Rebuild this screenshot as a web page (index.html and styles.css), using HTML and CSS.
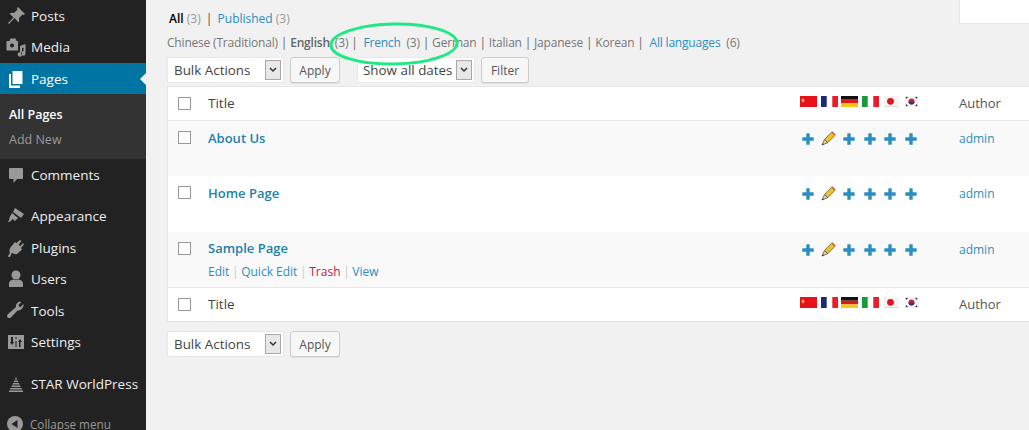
FILE: index.html
```html
<!DOCTYPE html>
<html lang="en">
<head>
<meta charset="utf-8">
<title>Pages</title>
<link rel="stylesheet" href="styles.css">
</head>
<body>
<svg width="0" height="0" class="defs">
  <defs>
    <g id="plus"><path d="M4.800.3h2.400a.5.5 0 0 1 .5.5v3.500h3.500a.5.5 0 0 1 .5.5v2.400a.5.5 0 0 1-.5.5H7.700v3.500a.5.5 0 0 1-.5.5H4.800a.5.5 0 0 1-.5-.5V7.700H.8a.5.5 0 0 1-.5-.5V4.800a.5.5 0 0 1 .5-.5h3.500V.8a.5.5 0 0 1 .5-.5z" fill="#2a8fc0"/></g>
    <g id="pencil">
      <path d="M3.500 8.500 10.500 1.200l3.300 3.200-7 7.300z" fill="#eec22e" stroke="#6b5a20" stroke-width=".8"/>
      <path d="M3.500 8.500 1 14l5.800-2.300z" fill="#e8d3a8" stroke="#555" stroke-width=".8"/>
      <path d="M1.800 12.200 1 14l1.900-.8z" fill="#222"/>
      <path d="M10.500 1.200l1-1 3.300 3.200-1 1z" fill="#c96a5a"/>
    </g>
    <g id="cn"><rect width="17" height="11" fill="#e8111a"/><path d="M3 2l.6 1.600L5 4l-1.200.8.3 1.600L3 5.500 1.900 6.400l.3-1.600L1 4l1.400-.4z" fill="#f8d84a"/></g>
    <g id="fr"><rect width="17" height="11" fill="#fff"/><rect width="5.700" height="11" fill="#1b2a78"/><rect x="11.300" width="5.700" height="11" fill="#ea1c2a"/></g>
    <g id="de"><rect width="17" height="3.700" fill="#111"/><rect y="3.700" width="17" height="3.700" fill="#dc1a1a"/><rect y="7.400" width="17" height="3.600" fill="#f2c81c"/></g>
    <g id="it"><rect width="17" height="11" fill="#fff"/><rect width="5.700" height="11" fill="#179a3c"/><rect x="11.300" width="5.700" height="11" fill="#ea1c2a"/></g>
    <g id="jp"><rect width="15" height="11" fill="#f4f4f4"/><rect y="10" width="15" height="1" fill="#ddd"/><circle cx="6.500" cy="5.300" r="3.400" fill="#e5101e"/></g>
    <g id="kr"><rect width="14" height="11" fill="#f4f4f4"/><circle cx="6.500" cy="5.500" r="3" fill="#d8232f"/><path d="M3.500 5.500a3 3 0 0 0 6 0z" fill="#1d3f8f"/><path d="M.8 2.200l1.600-1.200M.8 8.800l1.600 1.200M10.600 1l1.600 1.200M10.600 10l1.600-1.200" stroke="#222" stroke-width="1.200"/></g>
  </defs>
</svg>

<div class="app">
  <nav class="sidebar">
    <ul class="menu">
      <li class="item"><svg class="ico" viewBox="0 0 20 20"><path d="M12 1l7 7-1.500 1-1-.5-3.500 3.500c.5 2 .2 3.500-.5 4.500L8.500 12 3 18l-1-1 5.500-5.500L3.500 7.500c1-.7 2.500-1 4.500-.5L11.500 3.500 11 2.500z"/></svg><span>Posts</span></li>
      <li class="item"><svg class="ico" viewBox="0 0 20 20"><path d="M.5 4h3l1-2.500h5L10.500 4h1.500v9.500H.5zM6 6.500a2 2 0 1 0 .01 0zM19.500 7v9.500a2.200 2.200 0 1 1-2-2.200V10.500l-1.500.5v6.500a2.200 2.200 0 1 1-2-2.200V9z" fill-rule="evenodd"/></svg><span>Media</span></li>
      <li class="item current"><svg class="ico" viewBox="0 0 20 20"><path d="M6.500 2h10v13h-10z" fill="#fff"/><path d="M3 5h2v11.500h9V19H3z" fill="#fff"/></svg><span>Pages</span></li>
      <li class="submenu">
        <a class="sub on">All Pages</a>
        <a class="sub">Add New</a>
      </li>
      <li class="item"><svg class="ico" viewBox="0 0 20 20"><path d="M4 3h12a1 1 0 0 1 1 1v9a1 1 0 0 1-1 1h-5l-3.500 4v-4H4a1 1 0 0 1-1-1V4a1 1 0 0 1 1-1z"/></svg><span>Comments</span></li>
      <li class="item gap"><svg class="ico" viewBox="0 0 20 20"><path d="M9 2l9 6-3 4-8-6zM6 7l6 5-3 3-2.500-2c-1 2-2.500 3-5 3 1.500-1 2-3 2-4.500z"/></svg><span>Appearance</span></li>
      <li class="item"><svg class="ico" viewBox="0 0 20 20"><path d="M14 2l1.500 1-3 4 2 1L17 5l1 1.500-3 3.500 1 1.500-5 4.500c-2 .5-4-.3-5-1.500L4 19H2.500l-.5-1 2-3c-1-2-.7-4 .5-5.500L9 4l1.500 1z"/></svg><span>Plugins</span></li>
      <li class="item"><svg class="ico" viewBox="0 0 20 20"><circle cx="10" cy="6" r="4.500"/><path d="M3 18v-3.500C3 12 5 11 7.500 10.500c1.500 1 3.500 1 5 0C15 11 17 12 17 14.500V18z"/></svg><span>Users</span></li>
      <li class="item"><svg class="ico" viewBox="0 0 20 20"><path d="M17.500 3l-3 3-1.500-.5-.5-1.500 3-3c-3-.7-6 1.500-5.500 5L2 13c-1 1-1.300 2.500-.3 3.500s2.500.7 3.500-.3L11.500 9.500c3.500.5 6.700-3.500 6-6.500z"/></svg><span>Tools</span></li>
      <li class="item"><svg class="ico" viewBox="0 0 20 20"><path d="M2 3h16v14H2zM5 5v5H4l2 3 2-3H7V5zM13 15h1.500v-5H16l-2-3-2 3h1zM9.500 5v2h1V5zM9.500 9v6h1V9z" fill-rule="evenodd"/></svg><span>Settings</span></li>
      <li class="item gap star"><svg class="ico" viewBox="0 0 20 20"><path d="M10 3l1.200 2.500H8.800zM8.300 6.500h3.400l.7 1.500H7.600zM7.100 9h5.800l.7 1.500H6.400zM5.900 11.500h8.200l.7 1.500H5.200zM4.700 14h10.600l.7 1.500H4zM3 16.500h14V18H3z"/></svg><span>STAR WorldPress</span></li>
      <li class="collapse"><svg class="coll-ico" viewBox="0 0 16 16"><circle cx="8" cy="8" r="8" fill="#999"/><path d="M10.500 4v8L4.500 8z" fill="#222"/></svg><span>Collapse menu</span></li>
    </ul>
  </nav>

  <main class="main">
    <div class="search"></div>
    <div class="status"><b>All</b> <i>(3)</i> <span class="sep">|</span> <a>Published</a> <i>(3)</i></div>
    <div class="langs">Chinese (Traditional) <span class="s">|</span> <b>English</b> (3) <span class="s">|</span>&nbsp; <a>French</a>&nbsp; (3) <span class="s">|</span> German <span class="s">|</span> Italian <span class="s">|</span> Japanese <span class="s">|</span> Korean <span class="s">|</span>&nbsp; <a>All languages</a>&nbsp; (6)</div>
    <div class="actions">
      <div class="select bulk"><span>Bulk Actions</span><em class="arrow"><svg viewBox="0 0 8 6" width="8" height="6"><path d="M1 1l3 3 3-3" fill="none" stroke="#333" stroke-width="1.500"/></svg></em></div>
      <div class="btn">Apply</div>
      <div class="select dates"><span>Show all dates</span><em class="arrow"><svg viewBox="0 0 8 6" width="8" height="6"><path d="M1 1l3 3 3-3" fill="none" stroke="#333" stroke-width="1.500"/></svg></em></div>
      <div class="btn filter">Filter</div>
    </div>

    <div class="table">
      <div class="row head">
        <span class="cb"></span><span class="title">Title</span>
        <span class="flags"><svg class="f"><use href="#cn"/></svg><svg class="f"><use href="#fr"/></svg><svg class="f"><use href="#de"/></svg><svg class="f"><use href="#it"/></svg><svg class="f jp"><use href="#jp"/></svg><svg class="f kr"><use href="#kr"/></svg></span>
        <span class="author">Author</span>
      </div>
      <div class="row page alt">
        <span class="cb"></span><div class="title"><a class="name">About Us</a></div>
        <span class="marks"><svg class="m"><use href="#plus"/></svg><svg class="m pen"><use href="#pencil"/></svg><svg class="m"><use href="#plus"/></svg><svg class="m"><use href="#plus"/></svg><svg class="m"><use href="#plus"/></svg><svg class="m"><use href="#plus"/></svg></span>
        <a class="author">admin</a>
      </div>
      <div class="row page tall">
        <span class="cb"></span><div class="title"><a class="name">Home Page</a></div>
        <span class="marks"><svg class="m"><use href="#plus"/></svg><svg class="m pen"><use href="#pencil"/></svg><svg class="m"><use href="#plus"/></svg><svg class="m"><use href="#plus"/></svg><svg class="m"><use href="#plus"/></svg><svg class="m"><use href="#plus"/></svg></span>
        <a class="author">admin</a>
      </div>
      <div class="row page alt sample">
        <span class="cb"></span><div class="title"><a class="name">Sample Page</a>
          <div class="rowacts"><a>Edit</a> <s>|</s> <a>Quick Edit</a> <s>|</s> <a class="trash">Trash</a> <s>|</s> <a>View</a></div></div>
        <span class="marks"><svg class="m"><use href="#plus"/></svg><svg class="m pen"><use href="#pencil"/></svg><svg class="m"><use href="#plus"/></svg><svg class="m"><use href="#plus"/></svg><svg class="m"><use href="#plus"/></svg><svg class="m"><use href="#plus"/></svg></span>
        <a class="author">admin</a>
      </div>
      <div class="row head foot">
        <span class="cb"></span><span class="title">Title</span>
        <span class="flags"><svg class="f"><use href="#cn"/></svg><svg class="f"><use href="#fr"/></svg><svg class="f"><use href="#de"/></svg><svg class="f"><use href="#it"/></svg><svg class="f jp"><use href="#jp"/></svg><svg class="f kr"><use href="#kr"/></svg></span>
        <span class="author">Author</span>
      </div>
    </div>

    <div class="actions bottom">
      <div class="select bulk"><span>Bulk Actions</span><em class="arrow"><svg viewBox="0 0 8 6" width="8" height="6"><path d="M1 1l3 3 3-3" fill="none" stroke="#333" stroke-width="1.500"/></svg></em></div>
      <div class="btn">Apply</div>
    </div>

    <svg class="ring" width="134" height="48" viewBox="0 0 134 48"><ellipse cx="67" cy="24" rx="63" ry="20" fill="none" stroke="#1fe884" stroke-width="3" transform="rotate(-1 67 24)"/></svg>
  </main>
</div>
</body>
</html>
```

FILE: styles.css
```css
* { box-sizing: border-box; }
html, body { margin: 0; height: 430px; overflow: hidden; }
body { background: #f1f1f1; font-family: "Open Sans", "Liberation Sans", sans-serif; font-size: 13px; color: #444; }
.defs { position: absolute; }
.app { display: flex; height: 430px; overflow: hidden; }

.sidebar { width: 146px; flex: none; background: #222; color: #eee; }
.menu { list-style: none; margin: 0; padding: 0; }
.item { height: 31.5px; display: flex; align-items: center; padding-left: 6px; font-size: 13.500px; position: relative; }
.item .ico { width: 20px; height: 20px; fill: #999; margin-right: 5px; flex: none; }
.gap { margin-top: 10px; }
.current { background: #0074a2; color: #fff; height: 31px; }
.current::after { content: ""; position: absolute; right: 0; top: 10px; border: 6px solid transparent; border-right-color: #f1f1f1; border-left: 0; }
.submenu { background: #333; height: 65px; padding-top: 8px; display: flex; flex-direction: column; }
.sub { font-size: 12.500px; color: #999; padding-left: 9px; height: 25px; line-height: 25px; }
.sub.on { color: #fff; font-weight: 600; }
.collapse { margin-top: 16px; display: flex; align-items: center; padding-left: 7px; font-size: 11.700px; color: #999; white-space: nowrap; }
.coll-ico { width: 16px; height: 16px; margin-right: 7px; flex: none; }

.main { flex: 1; min-width: 0; padding: 0 0 0 21px; position: relative; }
.search { position: absolute; right: 0; top: 0; width: 70px; height: 24px; background: #fff; border: 1px solid #e6e6e6; border-top: 0; border-right: 0; }
.status { padding: 10px 0 0 2px; height: 28px; line-height: 18px; font-size: 12px; white-space: nowrap; }
.status b { font-weight: 600; color: #000; }
.status i { font-style: normal; color: #999; }
.status a, .langs a { color: #2a8fc0; }
.status .sep { margin: 0 2px; }
.langs { height: 29px; line-height: 29px; font-size: 12px; letter-spacing: -.19px; color: #777; white-space: nowrap; }
.langs b { font-weight: 600; color: #666; margin-right: 2px; }
.langs .s { color: #666; }
.actions { display: flex; height: 29px; align-items: flex-start; }
.select { background: #fff; border: 1px solid #e8e8e8; height: 26px; display: flex; align-items: center; justify-content: space-between; font-size: 13.400px; color: #444; padding: 0 2px 0 6px; white-space: nowrap; }
.bulk { width: 117px; }
.dates { width: 118px; margin-left: 17px; padding-left: 5px; }
.arrow { width: 16px; height: 20px; background: #e8e8e8; border: 1px solid #a8a8a8; display: flex; align-items: center; justify-content: center; flex: none; }
.btn { height: 26px; width: 50px; margin-left: 6px; background: #f7f7f7; border: 1px solid #ccc; border-radius: 3px; font-size: 12px; color: #555; display: flex; align-items: center; justify-content: center; box-shadow: 0 1px 0 #ddd; }
.filter { width: 48px; }

.table { background: #fff; border-top: 1px solid #e6e6e6; border-bottom: 1px solid #e0e0e0; border-left: 1px solid #e6e6e6; }
.row { display: flex; position: relative; align-items: center; }
.head { height: 34px; border-bottom: 1px solid #e6e6e6; padding-bottom: 1px; }
.foot { border-top: 1px solid #e6e6e6; border-bottom: 0; padding-bottom: 1px; }
.cb { width: 13px; height: 13px; flex: none; border: 1px solid #999; background: #fff; margin-left: 10px; }
.title { margin-left: 17px; font-size: 13.500px; color: #444; width: 592px; flex: none; }
.flags { width: 159px; flex: none; display: flex; align-items: center; margin-top: -3px; }
.f { width: 17px; height: 11px; margin-right: 3.500px; flex: none; }
.f.jp { width: 15px; margin-left: 2px; margin-right: 6px; }
.f.kr { width: 14px; margin-right: 0; }
.author { font-size: 13px; color: #555; white-space: nowrap; }
a.author { font-size: 12px; color: #2a8fc0; }
.page { height: 55px; align-items: flex-start; padding-top: 9px; }
.page .cb { margin-top: 1px; }
.tall { height: 56px; }
.sample { padding-top: 8px; }
.sample .cb { margin-top: 2px; }
.sample .marks { margin-top: 4px; }
.sample a.author { margin-top: 1px; }
.alt { background: #f9f9f9; }
.name { color: #1a82ad; font-weight: 600; font-size: 13px; line-height: 16px; display: block; }
.rowacts { margin-top: 8px; font-size: 12px; line-height: 16px; white-space: nowrap; }
.rowacts a { color: #2a8fc0; }
.rowacts .trash { color: #c0203a; }
.rowacts s { text-decoration: none; color: #ccc; margin: 0 -.5px; }
.marks { width: 159px; flex: none; display: flex; margin-top: 3px; padding-left: 2px; }
.m { width: 12px; height: 12px; margin-right: 8.400px; flex: none; overflow: visible; }
.pen { width: 15px; height: 15px; margin-top: -2px; margin-left: -1px; margin-right: 7px; }
.bottom { margin-top: 9px; }

.ring { position: absolute; left: 181px; top: 20px; pointer-events: none; }
```
